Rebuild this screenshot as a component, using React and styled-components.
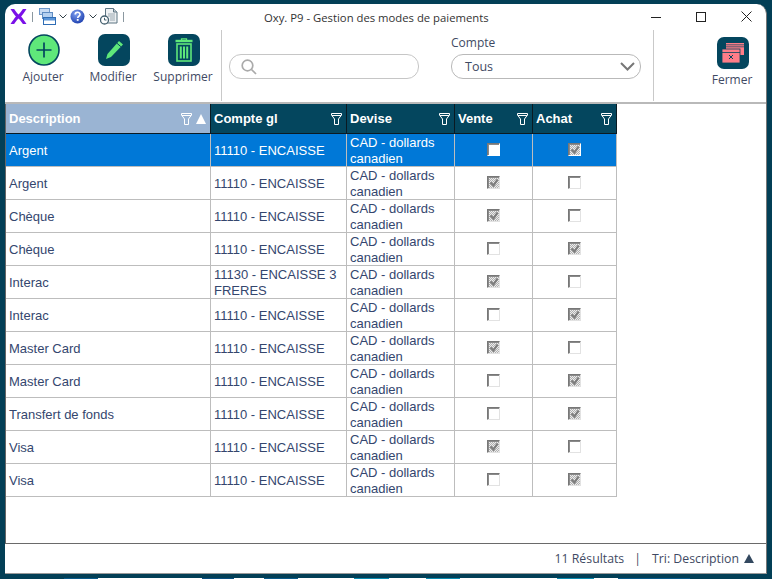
import React from 'react';
import styled, { createGlobalStyle } from 'styled-components';

const rows = [
  ['Argent', '11110 - ENCAISSE', false, true],
  ['Argent', '11110 - ENCAISSE', true, false],
  ['Chèque', '11110 - ENCAISSE', true, false],
  ['Chèque', '11110 - ENCAISSE', false, true],
  ['Interac', '11130 - ENCAISSE 3 FRERES', true, false],
  ['Interac', '11110 - ENCAISSE', false, true],
  ['Master Card', '11110 - ENCAISSE', true, false],
  ['Master Card', '11110 - ENCAISSE', false, true],
  ['Transfert de fonds', '11110 - ENCAISSE', false, true],
  ['Visa', '11110 - ENCAISSE', true, false],
  ['Visa', '11110 - ENCAISSE', false, true],
];

const FilterIcon = () => (
  <svg width="11" height="12" viewBox="0 0 11 12" fill="none" stroke="#fff" strokeWidth="1">
    <path d="M0.5 0.5h10v1.5L7.5 6v5.5h-4V6L0.5 2z" />
    <path d="M1 2.5h9" />
  </svg>
);

const Logo = () => (
  <svg width="17" height="17" viewBox="0 0 17 17">
    <path d="M0.5 1h3.600c1.800 2.500 3 4.200 4.400 5.500 1.400-1.300 2.600-3 4.400-5.500h3.600c-2 3-3.700 5.500-5.400 7.500 1.700 2 3.400 4.500 5.400 7.500h-3.600c-1.800-2.500-3-4.200-4.400-5.500-1.400 1.300-2.600 3-4.400 5.500H0.500c2-3 3.700-5.500 5.400-7.500C4.200 6.500 2.500 4 0.500 1z" fill="#7a10e8" />
  </svg>
);

const WindowsIcon = () => (
  <svg width="17" height="17" viewBox="0 0 17 17">
    <rect x="0.5" y="0.5" width="10" height="6" fill="#c8dcf4" stroke="#6d97c9" />
    <rect x="3.500" y="4.500" width="10" height="6" fill="#b4d0f0" stroke="#5f8cc2" />
    <rect x="4.500" y="9.500" width="12" height="7" fill="#fff" stroke="#2f6db5" />
    <rect x="5" y="10" width="11" height="2.500" fill="#5b95d8" />
  </svg>
);

const HelpIcon = () => (
  <svg width="16" height="15" viewBox="0 0 16 15">
    <defs>
      <radialGradient id="helpBlue" cx="40%" cy="30%" r="75%">
        <stop offset="0" stopColor="#7f9ff0" />
        <stop offset="1" stopColor="#1c3fae" />
      </radialGradient>
    </defs>
    <circle cx="7.500" cy="7.500" r="7" fill="url(#helpBlue)" />
    <path d="M5.200 5.600c0-3 4.800-3 4.800-.2 0 1.900-2.300 1.800-2.300 3.600" fill="none" stroke="#fff" strokeWidth="1.600" />
    <rect x="6.800" y="10" width="1.800" height="1.800" fill="#fff" />
  </svg>
);

const ReportIcon = () => (
  <svg width="18" height="17" viewBox="0 0 18 17">
    <path d="M5.500 0.500h8l3.500 3.500v11h-11.500z" fill="#eef1f3" stroke="#5d7482" />
    <path d="M13.500 0.500v3.500h3.500" fill="#c5ced4" stroke="#5d7482" />
    <path d="M8 6h7M8 8h7M10 10h5M10 12h5" stroke="#9aa8b1" />
    <circle cx="4.500" cy="12" r="4" fill="#fff" stroke="#45606f" strokeWidth="1.300" />
    <path d="M4.500 9.800V12h2" fill="none" stroke="#45606f" />
  </svg>
);

const Chevron = () => (
  <svg width="8" height="5" viewBox="0 0 8 5" fill="none" stroke="#33414a">
    <path d="M0.500 0.500L4 4l3.500-3.500" />
  </svg>
);

const PlusIcon = () => (
  <svg width="32" height="32" viewBox="0 0 32 32">
    <circle cx="16" cy="16" r="15" fill="#5fe87a" stroke="#04465e" strokeWidth="1.600" />
    <path d="M16 8.500v15M8.500 16h15" stroke="#04465e" strokeWidth="1.700" />
  </svg>
);

const PencilIcon = () => (
  <svg width="20" height="20" viewBox="0 0 20 20">
    <path d="M15 1l4 3.500L7 17l-5 2 1.500-5z" fill="#5fe87a" />
    <path d="M13 3.300l3.900 3.400" stroke="#04465e" strokeWidth="1" />
  </svg>
);

const TrashIcon = () => (
  <svg width="18" height="24" viewBox="0 0 18 24" fill="none" stroke="#5fe87a">
    <path d="M6.500 2.500V0.800h5v1.700" strokeWidth="1.300" />
    <path d="M0.500 3h17" strokeWidth="2.400" />
    <rect x="2" y="6" width="14" height="17" strokeWidth="1.600" />
    <path d="M5.800 8.500v12M9 8.500v12M12.200 8.500v12" strokeWidth="2" />
  </svg>
);

const CloseWindowsIcon = () => (
  <svg width="22" height="20" viewBox="0 0 22 20">
    <rect x="4" y="0" width="18" height="12" fill="#ff7d88" />
    <path d="M4 1.800h18M4 3.800h18" stroke="#04465e" strokeWidth="0.700" />
    <rect x="0" y="6" width="18" height="14" fill="#ff7d88" stroke="#04465e" strokeWidth="0.800" />
    <path d="M0 9.500h18" stroke="#04465e" strokeWidth="0.800" />
    <path d="M7 12l4 4M11 12l-4 4" stroke="#04465e" strokeWidth="1" />
  </svg>
);

const CheckMark = () => (
  <svg width="10" height="10" viewBox="0 0 10 10" fill="none" stroke="#7d7d7d" strokeWidth="2.200">
    <path d="M1.500 4.500l3 3 4-6" />
  </svg>
);

export default function App() {
  return (
    <>
      <GlobalStyle />
      <Window>
        <TitleBar>
          <QuickTools>
            <Logo />
            <Bar />
            <WindowsIcon />
            <Chevron />
            <HelpIcon />
            <Chevron />
            <ReportIcon />
            <Bar />
          </QuickTools>
          <Title>Oxy. P9 - Gestion des modes de paiements</Title>
          <WindowButtons>
            <WinButton>
              <svg width="10" height="10" viewBox="0 0 10 10" stroke="#222"><path d="M0 5.500h10" /></svg>
            </WinButton>
            <WinButton>
              <svg width="10" height="10" viewBox="0 0 10 10" fill="none" stroke="#222"><rect x="0.500" y="0.500" width="9" height="9" /></svg>
            </WinButton>
            <WinButton>
              <svg width="11" height="11" viewBox="0 0 11 11" stroke="#222"><path d="M0.500 0.500l10 10M10.500 0.500l-10 10" /></svg>
            </WinButton>
          </WindowButtons>
        </TitleBar>

        <Toolbar>
          <ActionGroup>
            <Action>
              <PlusIcon />
              <ActionLabel>Ajouter</ActionLabel>
            </Action>
            <Action>
              <IconTile><PencilIcon /></IconTile>
              <ActionLabel>Modifier</ActionLabel>
            </Action>
            <Action>
              <IconTile><TrashIcon /></IconTile>
              <ActionLabel>Supprimer</ActionLabel>
            </Action>
          </ActionGroup>
          <Filters>
            <SearchBox>
              <svg width="16" height="16" viewBox="0 0 16 16" fill="none" stroke="#aaa" strokeWidth="1.700">
                <circle cx="6.500" cy="6.500" r="5.300" />
                <path d="M10.500 10.500l4.500 4.500" />
              </svg>
            </SearchBox>
            <Field>
              <FieldLabel>Compte</FieldLabel>
              <SelectBox>
                <span>Tous</span>
                <svg width="15" height="9" viewBox="0 0 15 9" fill="none" stroke="#777" strokeWidth="2">
                  <path d="M1 1l6.500 6.500L14 1" />
                </svg>
              </SelectBox>
            </Field>
          </Filters>
          <CloseGroup>
            <Action>
              <IconTile><CloseWindowsIcon /></IconTile>
              <ActionLabel>Fermer</ActionLabel>
            </Action>
          </CloseGroup>
        </Toolbar>

        <GridArea>
          <DataGrid>
            <HeadCell $sorted>
              <span>Description</span>
              <HeadIcons>
                <FilterIcon />
                <SortUp />
              </HeadIcons>
            </HeadCell>
            <HeadCell>
              <span>Compte gl</span>
              <HeadIcons><FilterIcon /></HeadIcons>
            </HeadCell>
            <HeadCell>
              <span>Devise</span>
              <HeadIcons><FilterIcon /></HeadIcons>
            </HeadCell>
            <HeadCell>
              <span>Vente</span>
              <HeadIcons><FilterIcon /></HeadIcons>
            </HeadCell>
            <HeadCell>
              <span>Achat</span>
              <HeadIcons><FilterIcon /></HeadIcons>
            </HeadCell>
            {rows.map(([name, account, sale, purchase], i) => (
              <React.Fragment key={i}>
                <Cell $selected={i === 0}>{name}</Cell>
                <Cell $selected={i === 0}>{account}</Cell>
                <Cell $selected={i === 0}>CAD - dollards canadien</Cell>
                <CheckCell $selected={i === 0}>
                  <Check $checked={sale} $bright={i === 0}>{sale && <CheckMark />}</Check>
                </CheckCell>
                <CheckCell $selected={i === 0}>
                  <Check $checked={purchase} $bright={i === 0}>{purchase && <CheckMark />}</Check>
                </CheckCell>
              </React.Fragment>
            ))}
          </DataGrid>
        </GridArea>

        <Footer>
          <span>11 Résultats</span>
          <Divider>|</Divider>
          <span>Tri: Description</span>
          <FooterSort />
        </Footer>
      </Window>
      <DesktopEdge />
    </>
  );
}

const GlobalStyle = createGlobalStyle`
  html, body {
    margin: 0;
    height: 100%;
    background: #033f56;
    overflow: hidden;
  }
  #root {
    height: 100%;
  }
`;

const Window = styled.div`
  box-sizing: border-box;
  width: 762px;
  height: 570px;
  margin: 4px 0 0 5px;
  background: #fff;
  border-radius: 10px 10px 0 0;
  border-right: 1px solid #777;
  border-bottom: 1px solid #999;
  display: flex;
  flex-direction: column;
  font-family: 'Open Sans', sans-serif;
  color: #3f4a63;
`;

/* the taskbar pixels that show under the window in the photo */
const DesktopEdge = styled.div`
  position: fixed;
  left: 0;
  right: 0;
  bottom: 0;
  height: 1px;
  background: linear-gradient(
    to right,
    #033f56 64px,
    #0a5a8a 64px 98px,
    #fff 98px 202px,
    #0a4f80 202px 234px,
    #fff 234px 264px,
    #0a5a8a 264px 298px,
    #fff 298px 354px,
    #0a8bb0 354px 389px,
    #fff 389px 426px,
    #0a8bb0 426px 460px,
    #fff 460px 557px,
    #0a8bb0 557px 594px,
    #fff 594px 618px,
    #0a5a8a 618px 690px,
    #033f56 690px
  );
`;

const TitleBar = styled.div`
  height: 25px;
  flex: none;
  display: flex;
  align-items: center;
  position: relative;
`;

const QuickTools = styled.div`
  display: flex;
  align-items: center;
  gap: 3px;
  padding-left: 5px;
`;

const Bar = styled.i`
  display: block;
  width: 1px;
  height: 10px;
  background: #8b98a0;
  margin: 0 3px 0 2px;
`;

const Title = styled.div`
  position: absolute;
  left: 259px;
  top: 6px;
  font-size: 11.3px;
  line-height: 16px;
  color: #333;
  white-space: nowrap;
`;

const WindowButtons = styled.div`
  margin-left: auto;
  display: flex;
  align-items: center;
  padding-right: 14px;
  gap: 35px;
`;

const WinButton = styled.div`
  display: flex;
`;

const Toolbar = styled.div`
  height: 71px;
  flex: none;
  display: flex;
  border-bottom: 2px solid #b9b9b9;
  padding: 1px 0 1px;
  box-sizing: content-box;
`;

const ActionGroup = styled.div`
  width: 217px;
  flex: none;
  box-sizing: border-box;
  display: flex;
  gap: 8px;
  padding: 4px 0 0 8px;
  border-right: 1px solid #c9c9c9;
`;

const Action = styled.div`
  width: 62px;
  display: flex;
  flex-direction: column;
  align-items: center;
  gap: 3px;
  white-space: nowrap;
`;

const ActionLabel = styled.span`
  font-size: 12px;
  line-height: 16px;
  margin-right: 2px;
`;

const IconTile = styled.div`
  width: 32px;
  height: 32px;
  border-radius: 7px;
  background: #04465e;
  display: flex;
  align-items: center;
  justify-content: center;
`;

const Filters = styled.div`
  flex: 1;
  display: flex;
  align-items: flex-end;
  gap: 32px;
  padding: 0 12px 22px 7px;
  border-right: 1px solid #c9c9c9;
`;

const SearchBox = styled.div`
  box-sizing: border-box;
  width: 190px;
  height: 25px;
  border: 1px solid #c6c6c6;
  border-radius: 12px;
  display: flex;
  align-items: center;
  padding-left: 11px;
`;

const Field = styled.div`
  display: flex;
  flex-direction: column;
  gap: 3px;
`;

const FieldLabel = styled.div`
  font-size: 12px;
  line-height: 16px;
`;

const SelectBox = styled.div`
  box-sizing: border-box;
  width: 190px;
  height: 25px;
  border: 1px solid #b9b9b9;
  border-radius: 12px;
  display: flex;
  align-items: center;
  justify-content: space-between;
  padding: 0 5px 0 13px;
  font-size: 12.500px;
`;

const CloseGroup = styled.div`
  flex: none;
  width: 112px;
  display: flex;
  box-sizing: border-box;
  padding: 7px 0 0 48px;
`;

const GridArea = styled.div`
  flex: 1;
  min-height: 0;
  border-left: 1px solid #666;
`;

const DataGrid = styled.div`
  display: grid;
  width: max-content;
  grid-template-columns: 205px 136px 108px 78px 84px;
  grid-auto-rows: 33px;
  grid-template-rows: 30px;
  font-family: 'Liberation Sans', Arial, sans-serif;
  font-size: 13px;
  line-height: 16px;
`;

const HeadCell = styled.div`
  box-sizing: border-box;
  display: flex;
  align-items: center;
  justify-content: space-between;
  padding: 0 4px 0 3px;
  background: ${(p) => (p.$sorted ? '#9ab4d3' : '#04465e')};
  color: #fff;
  font-weight: 700;
  font-size: 13px;
  border-right: 1px solid #0a1a22;
  border-bottom: 1px solid #0a1a22;
`;

const HeadIcons = styled.div`
  display: flex;
  align-items: center;
  gap: 4px;
`;

const SortUp = styled.i`
  display: block;
  width: 0;
  height: 0;
  border-left: 5.500px solid transparent;
  border-right: 5.500px solid transparent;
  border-bottom: 10px solid #fff;
`;

const Cell = styled.div`
  box-sizing: border-box;
  padding: 2px 3px 0;
  display: flex;
  align-items: center;
  color: ${(p) => (p.$selected ? '#fff' : '#34466e')};
  background: ${(p) => (p.$selected ? '#0078d7' : '#fff')};
  border-right: 1px solid #bdbdbd;
  border-bottom: 1px solid #bdbdbd;
`;

const CheckCell = styled(Cell)`
  justify-content: center;
  padding: 0 0 1px;
`;

const Check = styled.span`
  box-sizing: border-box;
  width: 13px;
  height: 13px;
  display: flex;
  align-items: center;
  justify-content: center;
  background: ${(p) =>
    p.$checked
      ? 'repeating-conic-gradient(#b0b0b0 0 25%, #ececec 0 50%) 0 0 / 2px 2px'
      : '#fff'};
  border: 1px solid ${(p) => (p.$bright ? '#fff' : '#e2e2e2')};
  border-top-color: #777;
  border-left-color: #777;
  box-shadow: inset 1px 1px 0 #8a8a8a;
`;

const Footer = styled.div`
  height: 30px;
  flex: none;
  box-sizing: border-box;
  border-top: 1px solid #6a6a6a;
  display: flex;
  align-items: center;
  justify-content: flex-end;
  padding-right: 12px;
  font-size: 12.300px;
`;

const Divider = styled.span`
  margin: 0 11px 0 10px;
`;

const FooterSort = styled.i`
  display: block;
  width: 0;
  height: 0;
  margin-left: 5px;
  border-left: 5.500px solid transparent;
  border-right: 5.500px solid transparent;
  border-bottom: 9px solid #33485f;
`;
